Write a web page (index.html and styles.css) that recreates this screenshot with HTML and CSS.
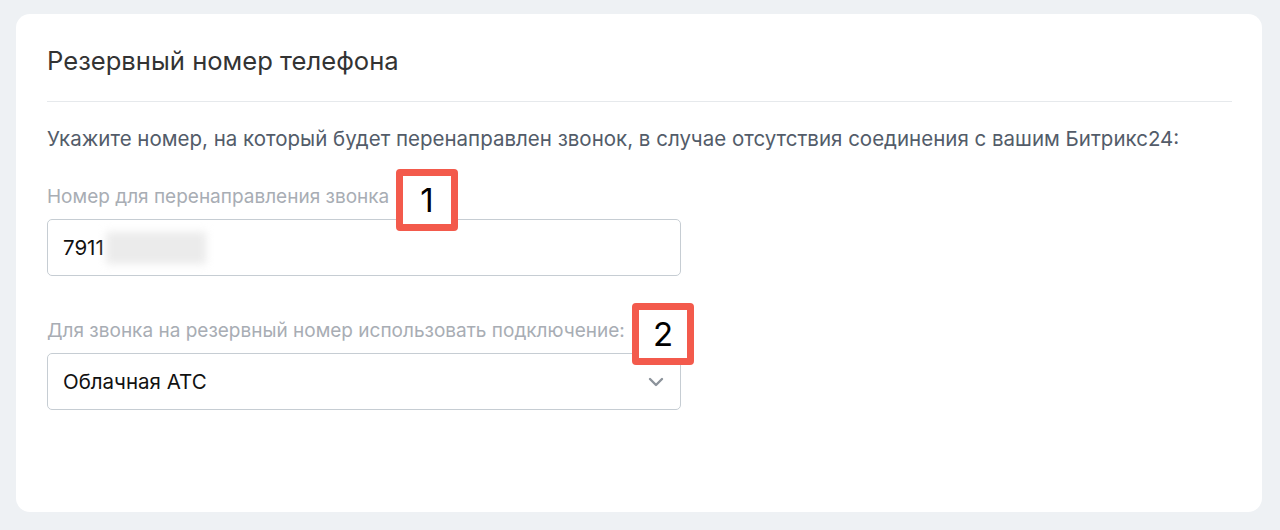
FILE: index.html
```html
<!DOCTYPE html>
<html lang="ru">
<head>
<meta charset="utf-8">
<link rel="stylesheet" href="styles.css">
</head>
<body>
<div class="card">
  <h1 class="title">Резервный номер телефона</h1>
  <p class="desc">Укажите номер, на который будет перенаправлен звонок, в случае отсутствия соединения с вашим Битрикс24:</p>
  <div class="field field-1">
    <div class="label">Номер для перенаправления звонка</div>
    <div class="input"><span class="val">7911</span><span class="blur"></span></div>
    <div class="badge badge-1">1</div>
  </div>
  <div class="field field-2">
    <div class="label">Для звонка на резервный номер использовать подключение:</div>
    <div class="input select"><span class="val">Облачная АТС</span>
      <svg class="chev" width="16" height="10" viewBox="0 0 16 10"><path d="M2 2 L8 8 L14 2" fill="none" stroke="#8c939b" stroke-width="2.4" stroke-linecap="round" stroke-linejoin="round"/></svg>
    </div>
    <div class="badge badge-2">2</div>
  </div>
</div>
</body>
</html>
```
FILE: styles.css
```css
html, body { margin: 0; padding: 0; }
body {
  background: #eef1f4;
  font-family: Inter, "Liberation Sans", sans-serif;
  width: 1280px;
  height: 530px;
  overflow: hidden;
}
.card {
  margin: 14px 18px 0 16px;
  height: 498px;
  background: #fff;
  border-radius: 14px;
  padding: 0 30px 0 31px;
  box-sizing: border-box;
  overflow: hidden;
}
.title {
  margin: 0;
  padding: 31px 0 24px 0;
  font-weight: 400;
  font-size: 25.6px;
  line-height: 32px;
  color: #333;
  border-bottom: 1px solid #e6e9ec;
}
.desc {
  margin: 25px 0 0 0;
  font-size: 20.5px;
  line-height: 24px;
  color: #535c69;
}
.field { position: relative; width: 634px; }
.field-1 { margin-top: 34px; }
.field-2 { margin-top: 43px; }
.label {
  font-size: 19px;
  line-height: 24px;
  color: #a8adb4;
  margin-bottom: 10px;
}
.input {
  height: 57px;
  box-sizing: border-box;
  border: 1px solid #c6cdd3;
  border-radius: 5px;
  display: flex;
  align-items: center;
  padding: 0 15px;
  font-size: 20.5px;
  color: #111;
}
.blur {
  display: inline-block;
  width: 100px;
  height: 32px;
  margin-left: 2px;
  background: #ebebeb;
  filter: blur(4px);
}
.select { justify-content: space-between; padding-right: 16px; }
.chev { display: block; }
.badge {
  position: absolute;
  width: 62px;
  height: 62px;
  box-sizing: border-box;
  border: 7px solid #f35a4c;
  border-radius: 4px;
  background: #fff;
  font-size: 33px;
  line-height: 48px;
  text-align: center;
  color: #000;
}
.badge-1 { left: 349px; top: -16px; }
.badge-2 { left: 585px; top: -16px; }
```
